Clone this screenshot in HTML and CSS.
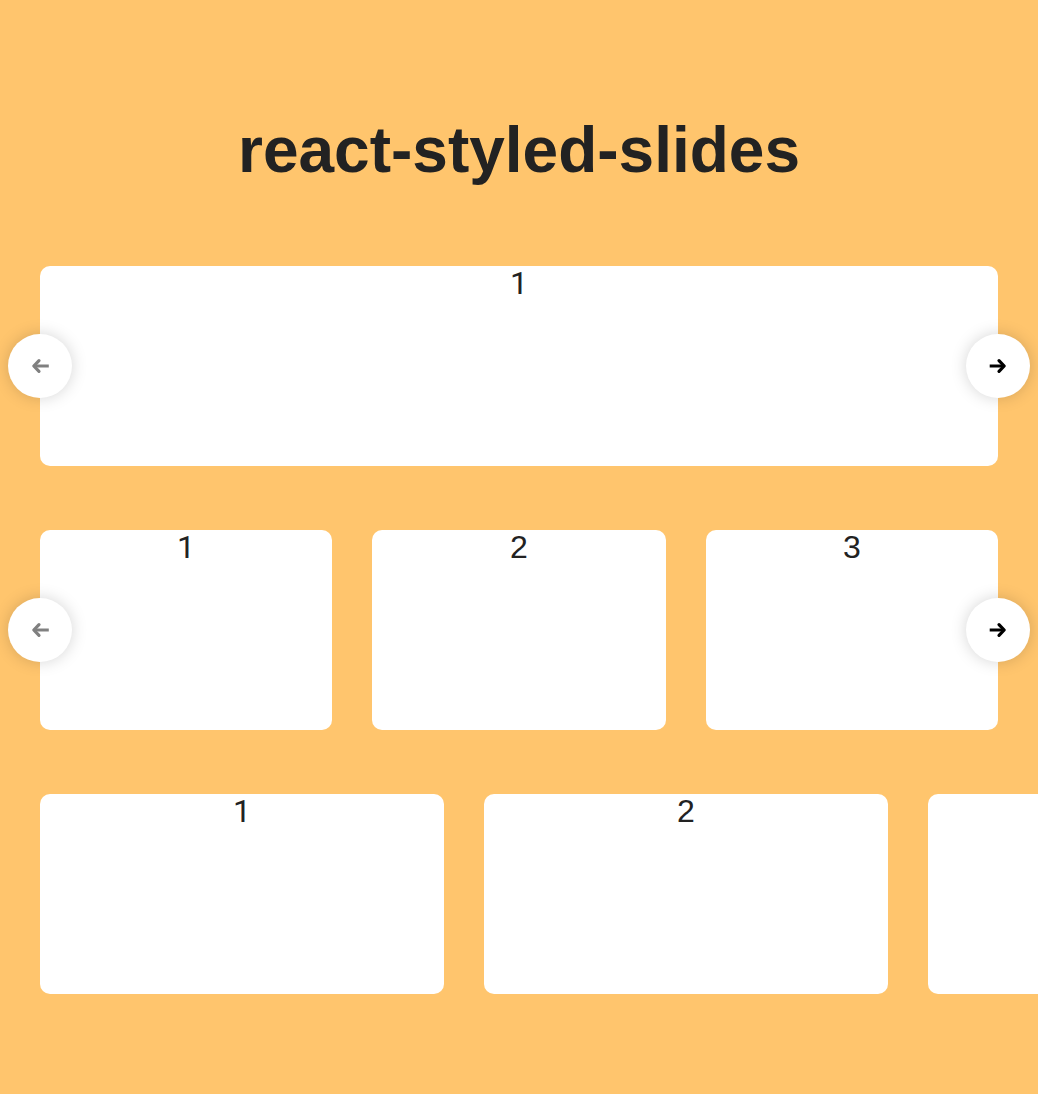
FILE: index.html
```html
<!DOCTYPE html>
<html lang="en">
<head>
<meta charset="utf-8">
<title>react-styled-slides</title>
<link rel="stylesheet" href="styles.css">
</head>
<body>
<h1 class="title">react-styled-slides</h1>
<main class="sliders">
  <section class="slider">
    <div class="track"><div class="slide first">1</div></div>
    <button class="arrow prev" disabled aria-label="Previous"><svg viewBox="0 0 20 16"><path d="M9 2.6L3.8 8L9 13.4"/><path class="shaft" d="M4.5 8H18.8"/></svg></button>
    <button class="arrow next" aria-label="Next"><svg viewBox="0 0 20 16"><path d="M11 2.6L16.2 8L11 13.4"/><path class="shaft" d="M15.5 8H1.7"/></svg></button>
  </section>
  <section class="slider">
    <div class="track three"><div class="slide first">1</div><div class="slide">2</div><div class="slide">3</div></div>
    <button class="arrow prev" disabled aria-label="Previous"><svg viewBox="0 0 20 16"><path d="M9 2.6L3.8 8L9 13.4"/><path class="shaft" d="M4.5 8H18.8"/></svg></button>
    <button class="arrow next" aria-label="Next"><svg viewBox="0 0 20 16"><path d="M11 2.6L16.2 8L11 13.4"/><path class="shaft" d="M15.5 8H1.7"/></svg></button>
  </section>
  <section class="slider">
    <div class="track peek"><div class="slide first">1</div><div class="slide">2</div><div class="slide"></div></div>
  </section>
</main>
</body>
</html>
```

FILE: styles.css
```css
* { box-sizing: border-box; }
body {
  margin: 0;
  min-height: 1094px;
  padding: 113px 40px 0;
  overflow: hidden;
  background: #ffc56d;
  color: #222;
  font: 32px/34px "Liberation Sans", Arial, sans-serif;
  text-align: center;
}
.title {
  margin: 0 0 79px;
  font-size: 64px;
  line-height: 74px;
  font-weight: 700;
}
.sliders { display: grid; grid-template-columns: minmax(0, 1fr); gap: 64px; }
.slider { position: relative; min-width: 0; }
.track { display: grid; gap: 40px; grid-auto-rows: 200px; }
.three { grid-template-columns: 292px 294px 292px; }
.peek {
  grid-template-columns: 404px 404px 110px;
  margin-right: -40px;
}
.peek .slide:last-child { border-radius: 10px 0 0 10px; }
.slide { background: #fff; border-radius: 10px; }
.first { font-family: Roboto, "Liberation Sans", sans-serif; }
.arrow {
  position: absolute;
  top: 68px;
  display: grid;
  place-items: center;
  width: 64px;
  height: 64px;
  padding: 0;
  border: 0;
  border-radius: 50%;
  background: #fff;
  color: #000;
  box-shadow: 0 0 16px rgba(0, 0, 0, 0.17);
}
.arrow:disabled { color: #808080; }
.prev { left: -32px; }
.next { right: -32px; }
.arrow svg {
  display: block;
  width: 20px;
  height: 16px;
  fill: none;
  stroke: currentColor;
  stroke-width: 3.2;
  stroke-linecap: round;
  stroke-linejoin: round;
}
.arrow .shaft {
  stroke-width: 3;
  stroke-linecap: butt;
}
```
